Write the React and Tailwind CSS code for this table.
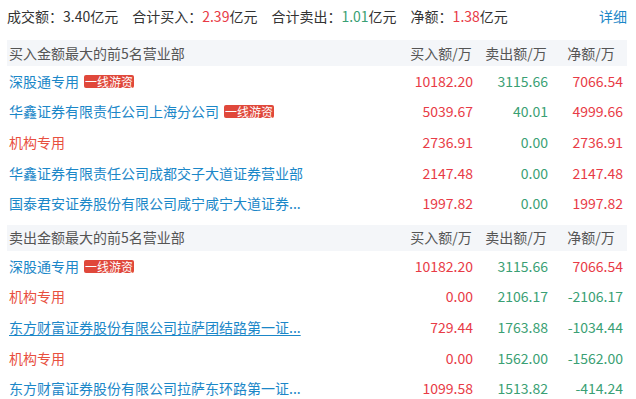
const buyRows = [
  { name: '深股通专用', tag: true, kind: 'link', buy: '10182.20', sell: '3115.66', net: '7066.54' },
  { name: '华鑫证券有限责任公司上海分公司', tag: true, kind: 'link', buy: '5039.67', sell: '40.01', net: '4999.66' },
  { name: '机构专用', kind: 'inst', buy: '2736.91', sell: '0.00', net: '2736.91' },
  { name: '华鑫证券有限责任公司成都交子大道证券营业部', kind: 'link', buy: '2147.48', sell: '0.00', net: '2147.48' },
  { name: '国泰君安证券股份有限公司咸宁咸宁大道证券...', kind: 'link', buy: '1997.82', sell: '0.00', net: '1997.82' },
];

const sellRows = [
  { name: '深股通专用', tag: true, kind: 'link', buy: '10182.20', sell: '3115.66', net: '7066.54' },
  { name: '机构专用', kind: 'inst', buy: '0.00', sell: '2106.17', net: '-2106.17' },
  { name: '东方财富证券股份有限公司拉萨团结路第一证...', kind: 'link', underline: true, buy: '729.44', sell: '1763.88', net: '-1034.44' },
  { name: '机构专用', kind: 'inst', buy: '0.00', sell: '1562.00', net: '-1562.00' },
  { name: '东方财富证券股份有限公司拉萨东环路第一证...', kind: 'link', buy: '1099.58', sell: '1513.82', net: '-414.24' },
];

const red = 'text-[#e83b46]';
const green = 'text-[#3a9f74]';

function numColor(v) {
  return v.startsWith('-') ? green : red;
}

function Section({ title, rows }) {
  return (
    <div>
      <div className="flex items-center h-[26px] bg-[#f4f6f9] text-[#555]">
        <div className="flex-1 pl-[2px]">{title}</div>
        <div className="w-[75px] text-center pl-[3px]">买入额/万</div>
        <div className="w-[75px] text-center pl-[3px]">卖出额/万</div>
        <div className="w-[75px] text-center pl-[3px]">净额/万</div>
      </div>
      {rows.map((r, i) => (
        <div key={i} className="flex items-center h-[30.6px]">
          <div className="flex-1 flex items-center gap-[5px] pl-[2px] min-w-0">
            <span
              className={
                r.kind === 'inst'
                  ? 'text-[#e8503f]'
                  : `text-[#1b87c8] ${r.underline ? 'underline underline-offset-2' : ''}`
              }
            >
              {r.name}
            </span>
            {r.tag && (
              <span className="bg-[#e0483b] text-white text-[12px] leading-[13px] px-[1px] rounded-[2px]">
                一线游资
              </span>
            )}
          </div>
          <div className={`w-[75px] text-right pr-[4px] ${red}`}>{r.buy}</div>
          <div className={`w-[75px] text-right pr-[4px] ${green}`}>{r.sell}</div>
          <div className={`w-[75px] text-right pr-[4px] ${numColor(r.net)}`}>{r.net}</div>
        </div>
      ))}
    </div>
  );
}

export default function App() {
  return (
    <div
      className="w-[636px] h-[399px] bg-white text-[14px] text-[#333] overflow-hidden px-[7px] pr-[9px]"
      style={{ fontFamily: '"Noto Sans CJK SC", "Noto Sans", sans-serif' }}
    >
      <div className="flex items-center h-[31px] pt-[1px]">
        <div className="flex items-center gap-[14px] flex-1">
          <span>成交额：3.40亿元</span>
          <span>合计买入：<span className={red}>2.39</span>亿元</span>
          <span>合计卖出：<span className={green}>1.01</span>亿元</span>
          <span>净额：<span className={red}>1.38</span>亿元</span>
        </div>
        <span className="text-[#1b87c8]">详细</span>
      </div>
      <div className="pt-[9px]">
        <Section title="买入金额最大的前5名营业部" rows={buyRows} />
      </div>
      <div className="pt-[6px]">
        <Section title="卖出金额最大的前5名营业部" rows={sellRows} />
      </div>
    </div>
  );
}
